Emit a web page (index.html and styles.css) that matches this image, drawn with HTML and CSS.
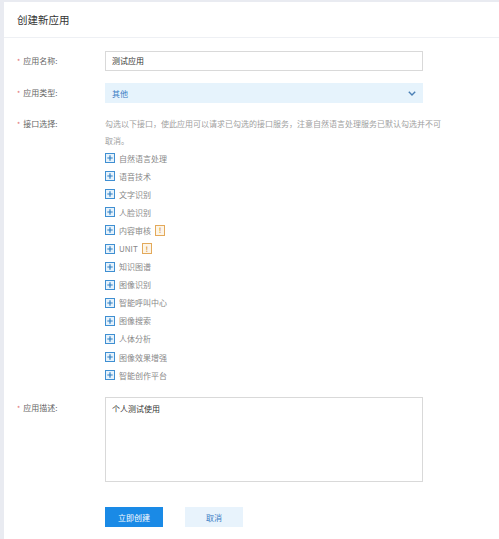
FILE: index.html
```html
<!DOCTYPE html>
<html lang="zh-CN">
<head>
<meta charset="utf-8">
<title>创建新应用</title>
<link rel="stylesheet" href="styles.css">
</head>
<body>
<div class="card">
  <div class="header">创建新应用</div>
  <div class="form">
    <div class="row">
      <div class="label"><span class="star">*</span>应用名称:</div>
      <div class="control input">测试应用</div>
    </div>
    <div class="row">
      <div class="label"><span class="star">*</span>应用类型:</div>
      <div class="control select">
        <span>其他</span>
        <svg class="chev" width="8" height="5" viewBox="0 0 8 5"><polyline points="0.8,0.8 4,4 7.2,0.8" fill="none" stroke="#4a7fb5" stroke-width="1.4"/></svg>
      </div>
    </div>
    <div class="row row-api">
      <div class="label label-api"><span class="star">*</span>接口选择:</div>
      <div class="control">
        <p class="desc">勾选以下接口，使此应用可以请求已勾选的接口服务，注意自然语言处理服务已默认勾选并不可取消。</p>
        <ul class="apis">
          <li><svg class="plus" width="10" height="10" viewBox="0 0 10 10"><rect x="0.5" y="0.5" width="9" height="9" fill="#e6f2fb" stroke="#3f8fd2"/><path d="M5 2.3v5.4M2.3 5h5.4" stroke="#2f7fc4" stroke-width="1.2"/></svg>自然语言处理</li>
          <li><svg class="plus" width="10" height="10" viewBox="0 0 10 10"><rect x="0.5" y="0.5" width="9" height="9" fill="#e6f2fb" stroke="#3f8fd2"/><path d="M5 2.3v5.4M2.3 5h5.4" stroke="#2f7fc4" stroke-width="1.2"/></svg>语音技术</li>
          <li><svg class="plus" width="10" height="10" viewBox="0 0 10 10"><rect x="0.5" y="0.5" width="9" height="9" fill="#e6f2fb" stroke="#3f8fd2"/><path d="M5 2.3v5.4M2.3 5h5.4" stroke="#2f7fc4" stroke-width="1.2"/></svg>文字识别</li>
          <li><svg class="plus" width="10" height="10" viewBox="0 0 10 10"><rect x="0.5" y="0.5" width="9" height="9" fill="#e6f2fb" stroke="#3f8fd2"/><path d="M5 2.3v5.4M2.3 5h5.4" stroke="#2f7fc4" stroke-width="1.2"/></svg>人脸识别</li>
          <li><svg class="plus" width="10" height="10" viewBox="0 0 10 10"><rect x="0.5" y="0.5" width="9" height="9" fill="#e6f2fb" stroke="#3f8fd2"/><path d="M5 2.3v5.4M2.3 5h5.4" stroke="#2f7fc4" stroke-width="1.2"/></svg>内容审核<span class="badge">!</span></li>
          <li><svg class="plus" width="10" height="10" viewBox="0 0 10 10"><rect x="0.5" y="0.5" width="9" height="9" fill="#e6f2fb" stroke="#3f8fd2"/><path d="M5 2.3v5.4M2.3 5h5.4" stroke="#2f7fc4" stroke-width="1.2"/></svg>UNIT<span class="badge">!</span></li>
          <li><svg class="plus" width="10" height="10" viewBox="0 0 10 10"><rect x="0.5" y="0.5" width="9" height="9" fill="#e6f2fb" stroke="#3f8fd2"/><path d="M5 2.3v5.4M2.3 5h5.4" stroke="#2f7fc4" stroke-width="1.2"/></svg>知识图谱</li>
          <li><svg class="plus" width="10" height="10" viewBox="0 0 10 10"><rect x="0.5" y="0.5" width="9" height="9" fill="#e6f2fb" stroke="#3f8fd2"/><path d="M5 2.3v5.4M2.3 5h5.4" stroke="#2f7fc4" stroke-width="1.2"/></svg>图像识别</li>
          <li><svg class="plus" width="10" height="10" viewBox="0 0 10 10"><rect x="0.5" y="0.5" width="9" height="9" fill="#e6f2fb" stroke="#3f8fd2"/><path d="M5 2.3v5.4M2.3 5h5.4" stroke="#2f7fc4" stroke-width="1.2"/></svg>智能呼叫中心</li>
          <li><svg class="plus" width="10" height="10" viewBox="0 0 10 10"><rect x="0.5" y="0.5" width="9" height="9" fill="#e6f2fb" stroke="#3f8fd2"/><path d="M5 2.3v5.4M2.3 5h5.4" stroke="#2f7fc4" stroke-width="1.2"/></svg>图像搜索</li>
          <li><svg class="plus" width="10" height="10" viewBox="0 0 10 10"><rect x="0.5" y="0.5" width="9" height="9" fill="#e6f2fb" stroke="#3f8fd2"/><path d="M5 2.3v5.4M2.3 5h5.4" stroke="#2f7fc4" stroke-width="1.2"/></svg>人体分析</li>
          <li><svg class="plus" width="10" height="10" viewBox="0 0 10 10"><rect x="0.5" y="0.5" width="9" height="9" fill="#e6f2fb" stroke="#3f8fd2"/><path d="M5 2.3v5.4M2.3 5h5.4" stroke="#2f7fc4" stroke-width="1.2"/></svg>图像效果增强</li>
          <li><svg class="plus" width="10" height="10" viewBox="0 0 10 10"><rect x="0.5" y="0.5" width="9" height="9" fill="#e6f2fb" stroke="#3f8fd2"/><path d="M5 2.3v5.4M2.3 5h5.4" stroke="#2f7fc4" stroke-width="1.2"/></svg>智能创作平台</li>
        </ul>
      </div>
    </div>
    <div class="row row-desc">
      <div class="label label-desc"><span class="star">*</span>应用描述:</div>
      <div class="control textarea">个人测试使用</div>
    </div>
    <div class="row row-btns">
      <div class="label"></div>
      <div class="btns">
        <button class="btn btn-primary">立即创建</button>
        <button class="btn btn-cancel">取消</button>
      </div>
    </div>
  </div>
</div>
</body>
</html>
```

FILE: styles.css
```css
html, body {
  margin: 0;
  padding: 0;
  height: 100%;
}
body {
  background: #e9ebf1;
  padding: 2px 0 0 4px;
  box-sizing: border-box;
  font-family: "Noto Sans CJK SC", "Noto Sans", "Liberation Sans", sans-serif;
}
.card {
  background: #fff;
  min-height: 100%;
}
.header {
  height: 35px;
  border-bottom: 1px solid #eef0f4;
  padding-left: 13px;
  display: flex;
  align-items: center;
  font-size: 10.5px;
  color: #333;
}
.form {
  padding: 13px 0 0 13px;
}
.row {
  display: flex;
  margin-bottom: 12px;
}
.label {
  width: 88px;
  flex: none;
  font-size: 8px;
  line-height: 20px;
  color: #666;
}
.star {
  color: #e07070;
  margin-right: 3px;
  font-size: 7px;
}
.control {
  width: 318px;
  flex: none;
  box-sizing: border-box;
  font-size: 8px;
}
.input {
  height: 20px;
  border: 1px solid #d9d9d9;
  padding-left: 6px;
  line-height: 18px;
  color: #333;
}
.select {
  height: 20px;
  background: #e6f3fc;
  padding: 0 7px;
  display: flex;
  align-items: center;
  justify-content: space-between;
  color: #3a7cc4;
}
.label-api {
  line-height: 17px;
}
.desc {
  margin: 0;
  width: 339px;
  color: #a0a0a0;
  line-height: 17px;
}
.apis {
  list-style: none;
  margin: 0;
  padding: 0;
}
.apis li {
  height: 18.1px;
  display: flex;
  align-items: center;
  color: #888;
}
.plus {
  margin-right: 4px;
  flex: none;
}
.badge {
  display: inline-flex;
  align-items: center;
  justify-content: center;
  box-sizing: border-box;
  width: 10px;
  height: 11px;
  margin-left: 4px;
  border: 1px solid #e3a95a;
  background: #fdf5e8;
  color: #d8983e;
  font-size: 7px;
  font-weight: bold;
}
.row-api {
  margin-bottom: 13px;
}
.label-desc {
  line-height: 22px;
}
.textarea {
  height: 85px;
  border: 1px solid #d9d9d9;
  padding: 5px 6px;
  line-height: 12px;
  color: #333;
}
.row-desc {
  margin-bottom: 25px;
}
.btns {
  display: flex;
  gap: 22px;
}
.btn {
  width: 58px;
  height: 20px;
  border: none;
  padding: 0;
  font-family: inherit;
  font-size: 8px;
}
.btn-primary {
  background: #1a8ae6;
  color: #fff;
}
.btn-cancel {
  background: #e8f3fc;
  color: #3a7cc4;
}
```
